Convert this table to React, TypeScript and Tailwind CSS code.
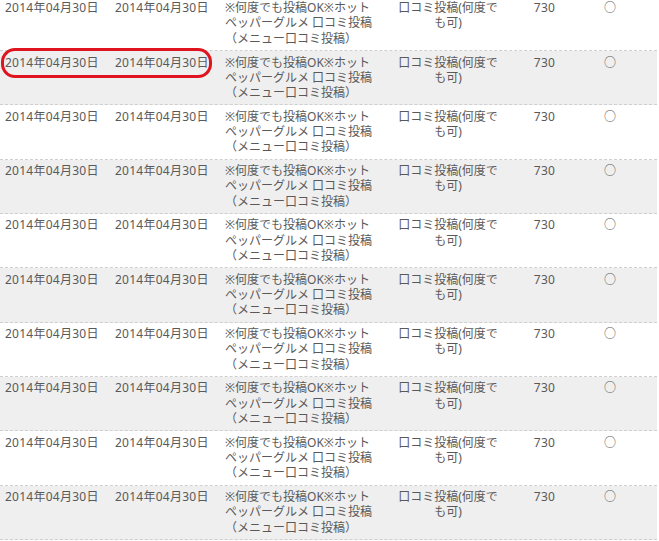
const rows = Array.from({ length: 10 }, (_, i) => ({
  id: i,
  registered: "2014年04月30日",
  approved: "2014年04月30日",
  title: "※何度でも投稿OK※ホットペッパーグルメ 口コミ投稿（メニュー口コミ投稿）",
  condition: "口コミ投稿(何度でも可)",
  reward: "730",
  status: "○",
}));

export default function App() {
  return (
    <div
      className="relative w-[659px] h-[541px] overflow-hidden bg-white text-[12px] leading-[15.3px] text-[#595959]"
      style={{ fontFamily: '"Noto Sans", "Noto Sans CJK JP", sans-serif' }}
    >
      <div className="mt-[-3.33px] w-[657px]">
        {rows.map((row) => (
          <div
            key={row.id}
            className={`grid grid-cols-[110px_110px_173px_110px_83px_48px] h-[54.33px] border-b border-dashed border-[#cfcfcf] pt-[3.5px] ${
              row.id % 2 === 1 ? "bg-[#efefef]" : "bg-white"
            }`}
          >
            <div className="pl-[5px] whitespace-nowrap tracking-[0.25px]">{row.registered}</div>
            <div className="pl-[5px] whitespace-nowrap tracking-[0.25px]">{row.approved}</div>
            <div className="pl-[5px] pr-[13px]">{row.title}</div>
            <div className="px-[5px] text-center">{row.condition}</div>
            <div className="text-center tracking-[0.3px]">{row.reward}</div>
            <div className="text-center">{row.status}</div>
          </div>
        ))}
      </div>

      {/* red highlight around row 2 dates */}
      <div className="absolute left-[1px] top-[48px] w-[211px] h-[30px] rounded-[14px] border-[3px] border-[#e0141e]" />
    </div>
  );
}
